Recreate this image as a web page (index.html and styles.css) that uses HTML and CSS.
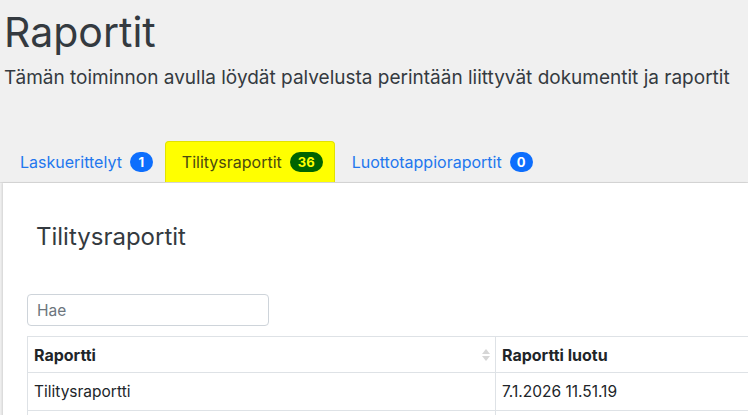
FILE: index.html
```html
<!DOCTYPE html>
<html lang="fi">
<head>
<meta charset="utf-8">
<title>Raportit</title>
<link rel="stylesheet" href="styles.css">
</head>
<body>
<header class="page-head">
  <h1 class="page-title">Raportit</h1>
  <p class="lead">Tämän toiminnon avulla löydät palvelusta perintään liittyvät dokumentit ja raportit</p>
</header>
<nav class="tabs">
  <a class="tab">Laskuerittelyt <span class="badge">1</span></a>
  <a class="tab active">Tilitysraportit <span class="badge badge-active">36</span></a>
  <a class="tab">Luottotappioraportit <span class="badge">0</span></a>
</nav>
<section class="card">
  <h2 class="card-title">Tilitysraportit</h2>
  <input class="search" type="text" placeholder="Hae">
  <table class="grid">
    <thead>
      <tr>
        <th class="col-name">Raportti
          <svg class="sort" width="8" height="16" viewBox="0 0 8 16"><path d="M4 2 L8 7 H0 Z" fill="#d6d6d6"/><path d="M4 14 L8 9 H0 Z" fill="#d6d6d6"/></svg>
        </th>
        <th>Raportti luotu</th>
      </tr>
    </thead>
    <tbody>
      <tr><td>Tilitysraportti</td><td>7.1.2026 11.51.19</td></tr>
      <tr><td></td><td></td></tr>
    </tbody>
  </table>
</section>
</body>
</html>
```
FILE: styles.css
```css
html, body {
  margin: 0;
  padding: 0;
  background: #f0f0f0;
  font-family: Inter, "Noto Sans", sans-serif;
  color: #343a40;
  overflow: hidden;
  height: 415px;
}
.page-head {
  padding: 0 0 0 4px;
}
.page-title {
  margin: 0;
  padding-top: 8px;
  font-size: 41px;
  font-weight: 400;
  line-height: 48px;
  color: #343a40;
}
.lead {
  margin: 10px 0 0 0;
  font-size: 19px;
  line-height: 24px;
  font-weight: 400;
}
.tabs {
  display: flex;
  align-items: stretch;
  margin-top: 51px;
  padding-left: 3px;
  border-bottom: 1px solid #dcdcdc;
  height: 41px;
}
.tab {
  display: flex;
  align-items: center;
  gap: 8px;
  padding: 0 11px 0 16px;
  font-size: 16px;
  color: #2277ee;
  border: 1px solid transparent;
  border-bottom: none;
  border-radius: 4px 4px 0 0;
}
.tab.active {
  background: #ffff00;
  border-color: #e2e200;
  color: #4a4a10;
}
.badge {
  display: inline-flex;
  align-items: center;
  justify-content: center;
  min-width: 9px;
  height: 20px;
  padding: 0 7px;
  border-radius: 10px;
  background: #0d6efd;
  color: #fff;
  font-size: 13px;
  font-weight: 700;
}
.badge-active {
  background: #006400;
  color: #ffff00;
  padding: 0 8px;
}
.card {
  margin-left: 3px;
  background: #fff;
  box-shadow: -1px 0 2px rgba(0,0,0,0.12);
  padding: 37px 0 0 24px;
  height: 300px;
}
.card-title {
  margin: 0 0 0 9px;
  font-size: 24px;
  font-weight: 400;
  line-height: 34px;
  color: #343a40;
}
.search {
  display: block;
  margin-top: 40px;
  width: 242px;
  height: 32px;
  box-sizing: border-box;
  border: 1px solid #ced4da;
  border-radius: 4px;
  padding: 0 9px;
  font-family: inherit;
  font-size: 15.5px;
  color: #343a40;
}
.search::placeholder {
  color: #6c757d;
}
.grid {
  margin-top: 10px;
  border-collapse: collapse;
  width: 760px;
  font-size: 15.5px;
}
.grid th, .grid td {
  text-align: left;
  border-top: 1px solid #dee2e6;
  padding: 0 6px;
  color: #212529;
}
.grid th {
  height: 35px;
  font-size: 16px;
  font-weight: 700;
  border-bottom: 1px solid #dee2e6;
}
.grid td {
  height: 37px;
}
.grid th:first-child, .grid td:first-child {
  border-left: 1px solid #dee2e6;
  width: 455px;
}
.grid th + th, .grid td + td {
  border-left: 1px solid #dee2e6;
}
.col-name {
  position: relative;
}
.sort {
  position: absolute;
  right: 5px;
  top: 50%;
  margin-top: -8px;
}
```
